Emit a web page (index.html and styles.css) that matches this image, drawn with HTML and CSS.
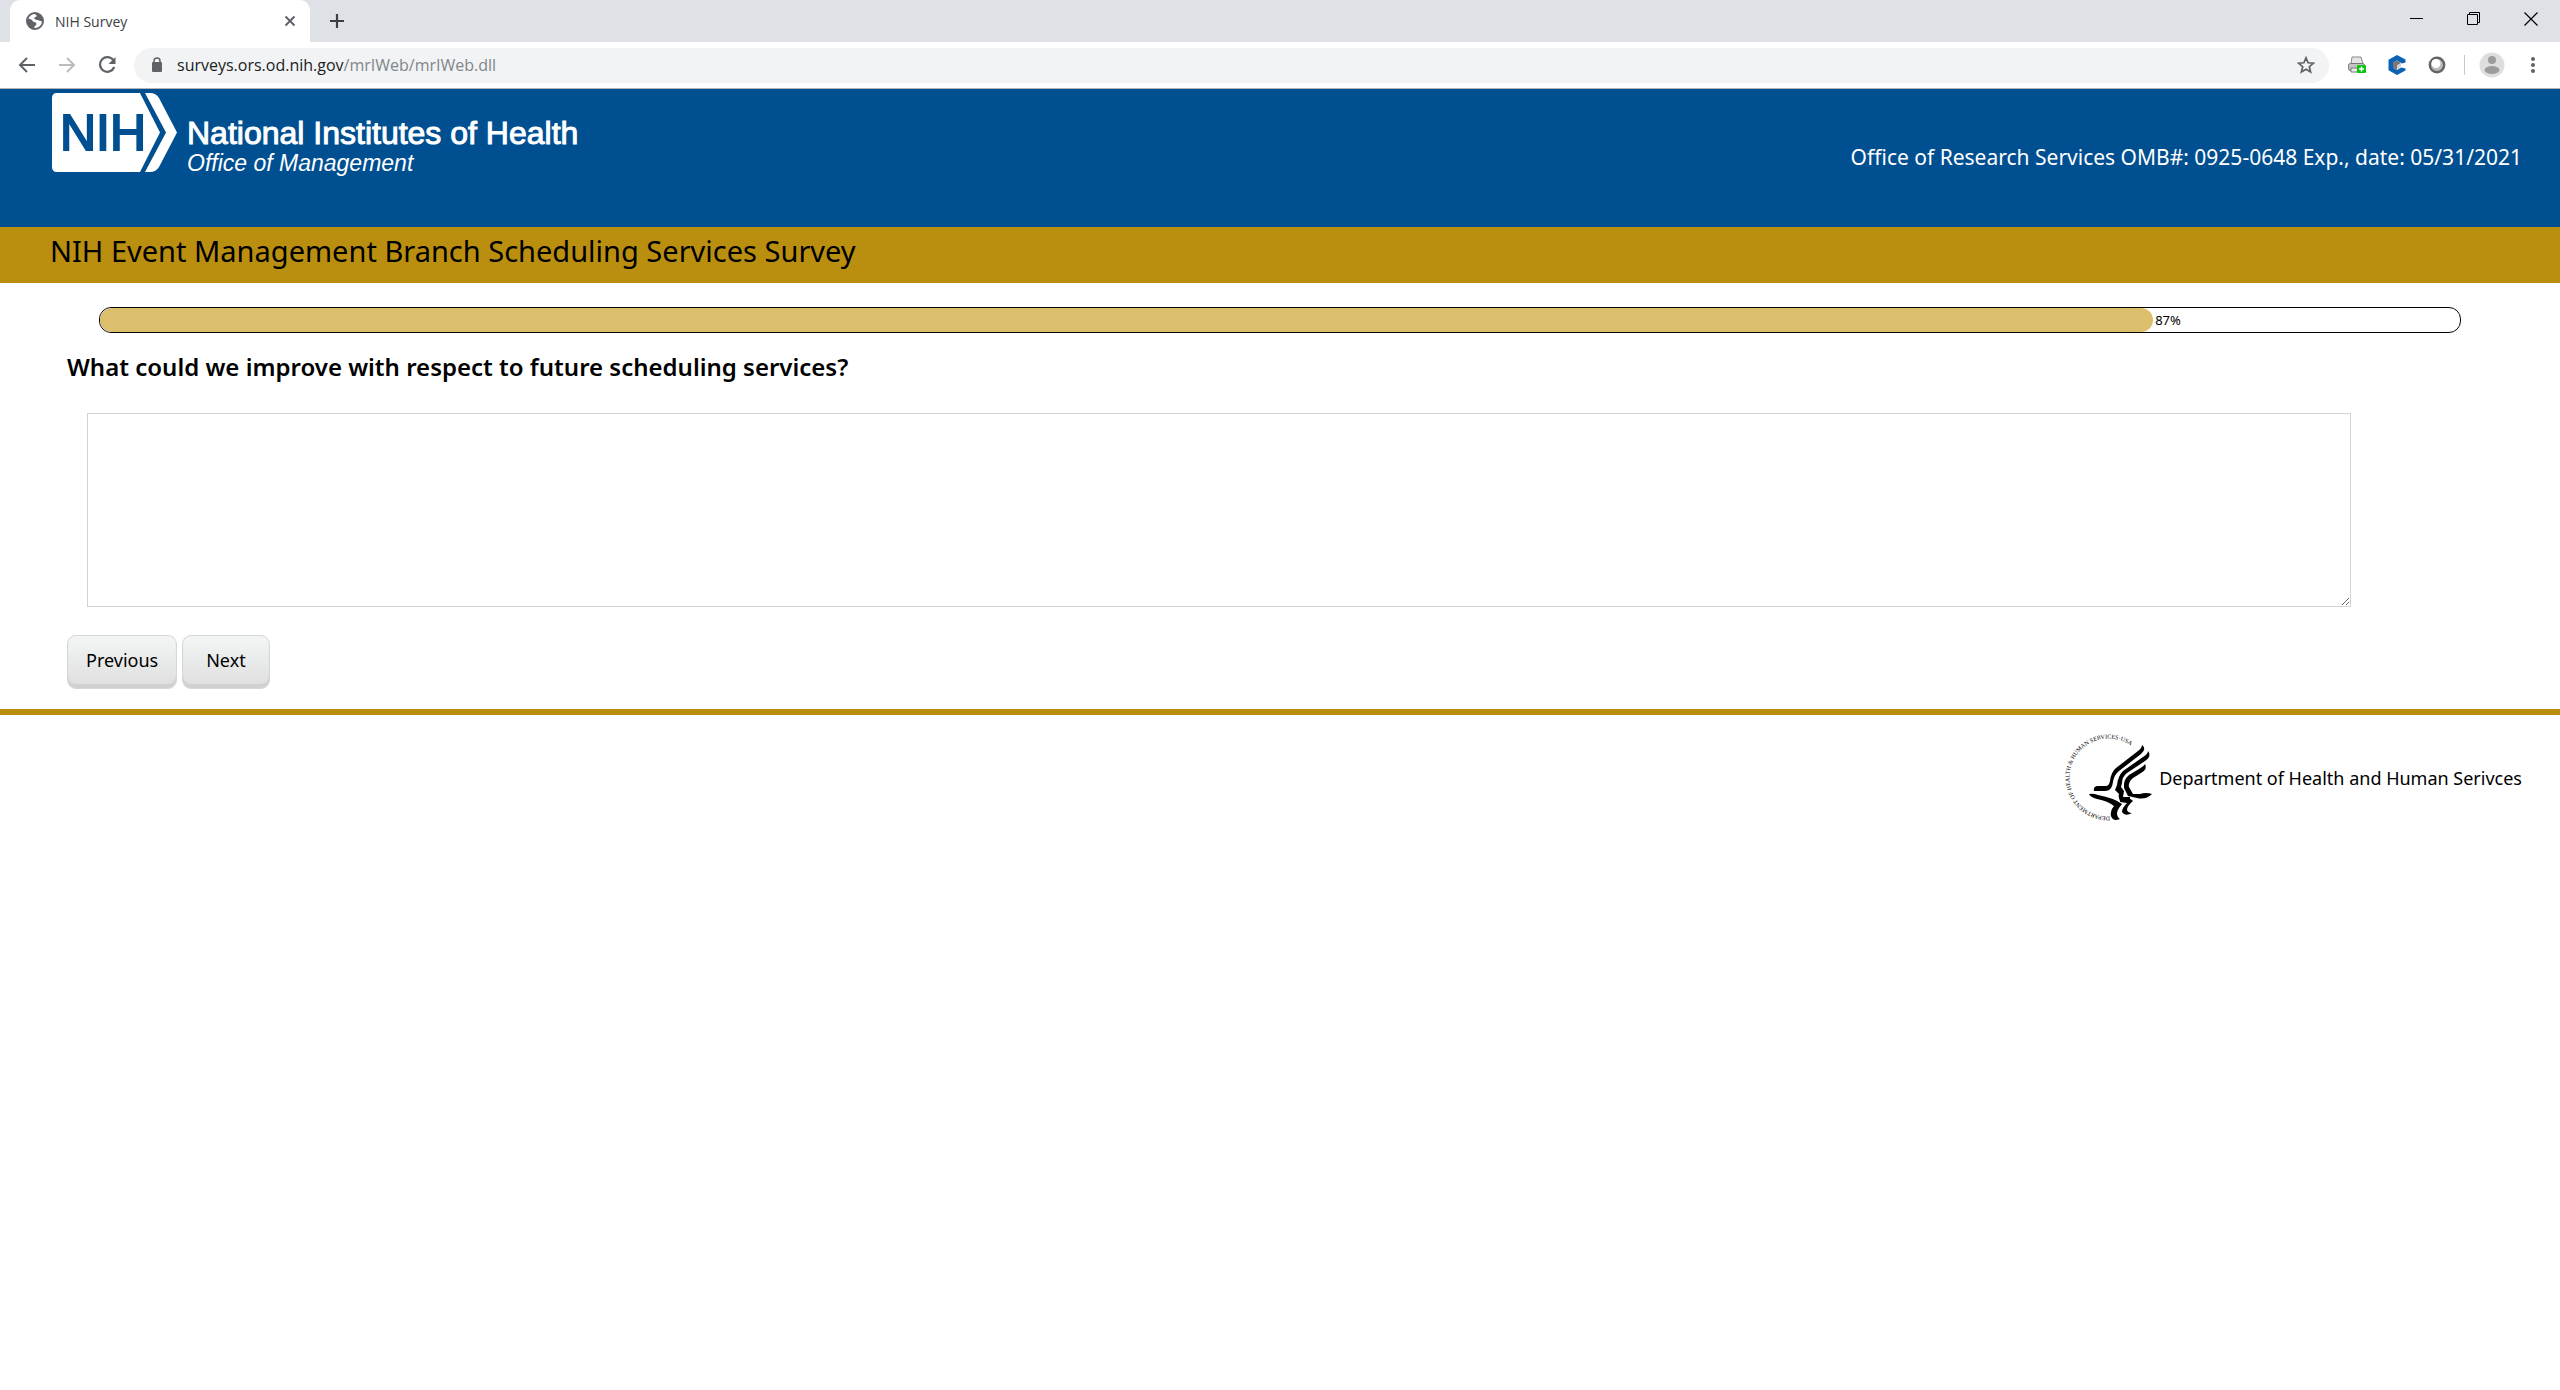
FILE: index.html
```html
<!DOCTYPE html>
<html lang="en">
<head>
  <meta charset="UTF-8">
  <meta name="viewport" content="width=device-width, initial-scale=1.0">
  <title>NIH Survey</title>
  <link rel="stylesheet" href="styles.css">
</head>
<body>

<!-- Browser window -->
<div class="tabs">
  <div class="tab">
    <svg class="globe" width="18" height="18" viewBox="0 0 18 18">
      <circle cx="9" cy="9" r="8" fill="#fff" stroke="#5f6368" stroke-width="2"/>
      <path d="M1 7c3-.5 5 .5 6 2.500 2 .5 3.500 1 3.500 3l-2 2-.5 3C4 17 1 14 1 9zM8 1c5-.5 9 3 9 8-2 .5-4 0-5-1-2 0-3.500-.5-4-2 1-1 2-1 3-2z" fill="#5f6368"/>
    </svg>
    <span class="tab-title">NIH Survey</span>
    <button class="icon-btn" aria-label="Close tab">
      <svg width="12" height="12" viewBox="0 0 12 12"><path d="M1.500 1.500l9 9M10.500 1.500l-9 9" stroke="#5f6368" stroke-width="2"/></svg>
    </button>
  </div>
  <button class="icon-btn new-tab" aria-label="New tab">
    <svg width="16" height="16" viewBox="0 0 16 16"><path d="M8 1v14M1 8h14" stroke="#3c4043" stroke-width="2.200"/></svg>
  </button>
  <div class="window-buttons">
    <button class="icon-btn" aria-label="Minimize"><svg width="14" height="14" viewBox="0 0 14 14"><path d="M0 6.500h13" stroke="#000"/></svg></button>
    <button class="icon-btn" aria-label="Restore"><svg width="14" height="14" viewBox="0 0 14 14"><path d="M.5 2.500h10v10H.5zM2.500 2.500v-2h10v10h-2" fill="none" stroke="#000"/></svg></button>
    <button class="icon-btn" aria-label="Close"><svg width="14" height="14" viewBox="0 0 14 14"><path d="M.5.5l13 13M13.500.5l-13 13" stroke="#000" stroke-width="1.200"/></svg></button>
  </div>
</div>

<div class="toolbar">
  <div class="nav">
    <button class="icon-btn" aria-label="Back"><svg width="18" height="18" viewBox="0 0 18 18"><path d="M17 9H2M9 2L2 9l7 7" fill="none" stroke="#5f6368" stroke-width="2"/></svg></button>
    <button class="icon-btn" aria-label="Forward"><svg width="18" height="18" viewBox="0 0 18 18"><path d="M1 9h15M9 2l7 7-7 7" fill="none" stroke="#babcbe" stroke-width="2"/></svg></button>
    <button class="icon-btn" aria-label="Reload"><svg width="18" height="18" viewBox="0 0 18 18"><path d="M15.500 4.500A7.300 7.300 0 1 0 16.200 11" fill="none" stroke="#5f6368" stroke-width="2.200"/><path d="M17.500 1v7h-7z" fill="#5f6368"/></svg></button>
  </div>
  <div class="address">
    <svg width="12" height="16" viewBox="0 0 12 16"><rect x="1" y="5" width="10" height="10" rx="1" fill="#5f6368"/><path d="M3 6V4a3 3 0 0 1 6 0v2" fill="none" stroke="#5f6368" stroke-width="1.500"/></svg>
    <span class="url">surveys.ors.od.nih.gov<span class="path">/mrIWeb/mrIWeb.dll</span></span>
    <button class="icon-btn" aria-label="Bookmark"><svg width="18" height="18" viewBox="0 0 18 18"><path d="M9 1.800l2.100 5 5.300.4-4.100 3.500 1.300 5.300L9 13.200 4.400 16l1.300-5.300-4.100-3.500 5.300-.4z" fill="none" stroke="#5f6368" stroke-width="1.700"/></svg></button>
  </div>
  <div class="extensions">
    <svg width="18" height="18" viewBox="0 0 18 18">
      <path d="M4 1h9l2 7H3z" fill="#e4e4e4" stroke="#8a8a8a"/>
      <rect x=".5" y="7.500" width="16" height="7" rx="2" fill="#c4c4c4" stroke="#777"/>
      <path d="M3 12h9v4H3z" fill="#eee" stroke="#777"/>
      <rect x="9" y="9" width="9" height="8" rx="1" fill="#0bc40b"/><path d="M13.500 10.500v5M11 13h5" stroke="#fff" stroke-width="1.500"/>
    </svg>
    <svg width="18" height="20" viewBox="0 0 18 20">
      <path d="M9 0l8.500 4.500v3L14 8.500 9 5.500 5 7.800v5L9 15l4-2.500 4.500 1v2L9 20 .5 15.300V4.700z" fill="#0d62b5"/>
      <path d="M9 5.500l4 2.500-4 2.500v4.500l-4-2.200v-5z" fill="#777"/><path d="M9 10.500l4-2.500v3l-4 4z" fill="#d0d0d0"/>
    </svg>
    <svg width="18" height="18" viewBox="0 0 18 18"><circle cx="9" cy="9" r="7.200" fill="#bbb" stroke="#666" stroke-width="2.400"/><circle cx="8" cy="7.500" r="4.500" fill="#fff"/></svg>
    <span class="divider"></span>
    <svg width="26" height="26" viewBox="0 0 26 26"><circle cx="13" cy="13" r="12.500" fill="#dedede"/><circle cx="13" cy="8" r="4" fill="#9c9c9c"/><ellipse cx="13" cy="18" rx="7.500" ry="4" fill="#9c9c9c"/></svg>
    <button class="icon-btn" aria-label="Menu"><svg width="6" height="18" viewBox="0 0 6 18"><g fill="#5f6368"><circle cx="3" cy="3" r="2"/><circle cx="3" cy="9" r="2"/><circle cx="3" cy="15" r="2"/></g></svg></button>
  </div>
</div>

<!-- Survey page -->
<header class="banner">
  <div class="brand">
    <svg width="128" height="82" viewBox="0 0 128 82">
      <path d="M7 1h83l20 39.500L90 80H7q-5 0-5-5V6q0-5 5-5z" fill="#fff"/>
      <path d="M95 1h5q6 0 9 5l18 34.500L109 75q-3 5-9 5h-5l21-39.500z" fill="#fff"/>
      <text class="nih" x="10" y="58">NIH</text>
    </svg>
    <div class="brand-text">
      <div class="institute">National Institutes of Health</div>
      <div class="office">Office of Management</div>
    </div>
  </div>
  <div class="omb">Office of Research Services OMB#: 0925-0648 Exp., date: 05/31/2021</div>
</header>
<h1 class="title">NIH Event Management Branch Scheduling Services Survey</h1>

<main>
  <div class="progress">
    <div class="bar" style="width: 87%"></div>
    <span class="percent">87%</span>
  </div>
  <form class="survey">
    <label class="question" for="answer">What could we improve with respect to future scheduling services?</label>
    <textarea id="answer" class="answer"></textarea>
    <div class="buttons">
      <button type="button" class="btn">Previous</button>
      <button type="button" class="btn next">Next</button>
    </div>
  </form>
</main>

<footer class="footer">
  <svg class="seal" width="90" height="92" viewBox="0 0 90 92">
    <path id="ring" d="M47 84.500A39 39 0 1 1 78 24" fill="none"/>
    <text class="seal-text"><textPath href="#ring">DEPARTMENT OF HEALTH &amp; HUMAN SERVICES·USA</textPath></text>
    <path d="M79 13q5 4-1 9L56 39q-5 4-6 11-1 9-8 9H31q-1-4 3-5h9q3 0 4-5 1-9 6-13l22-17q4-3 4-6z"/>
    <path d="M85 19q4 5-3 10L64 41q-5 4-5 10l-1 4 3 4-1 6h7v4H57q-2-4-1-7l-4-4 2-5q1-9 6-14l20-14q5-3 5-6z"/>
    <path d="M82 32q3 5-4 9l-8 5q-5 4-4 9l4 7h7q6-2 12 0-6 6-15 4l-9-2-4-8q-1-8 5-13l10-6q5-3 6-5z"/>
    <path d="M26 62q4-1 9 1 16 3 24 9-5 6-5 9 0 4 3 6-7 3-9-3-1-5 3-10-6-5-17-7-7-2-8-5z"/>
    <path d="M58 66q8-1 12 3-6 5-6 9 1 3 5 3-7 4-10-1 0-4 5-9l-7-1z"/>
  </svg>
  <span>Department of Health and Human Serivces</span>
</footer>

</body>
</html>
```
FILE: styles.css
```css
* {
  box-sizing: border-box;
}
body {
  margin: 0;
  background: #fff;
  color: #000;
  font-family: "Noto Sans", sans-serif;
  font-size: 18px;
}
svg {
  display: block;
  flex: none;
}
.icon-btn {
  padding: 0;
  border: none;
  background: none;
}

/* Browser */
.tabs {
  display: flex;
  align-items: center;
  height: 42px;
  padding-left: 10px;
  background: #dee1e6;
}
.tab {
  display: flex;
  align-items: center;
  align-self: stretch;
  gap: 11px;
  width: 300px;
  padding: 0 14px 0 16px;
  border-radius: 10px 10px 0 0;
  background: #fff;
}
.tab-title {
  flex: 1;
  font-family: "Open Sans", sans-serif;
  font-size: 14px;
  color: #3c4043;
}
.new-tab {
  margin-left: 19px;
}
.window-buttons {
  display: flex;
  gap: 43px;
  margin-left: auto;
  padding: 0 22px 4px 0;
}
.toolbar {
  display: flex;
  align-items: center;
  height: 47px;
  padding: 0 24px 0 18px;
  border-bottom: 1px solid #b5b5b5;
}
.nav {
  display: flex;
  gap: 22px;
  margin-right: 18px;
}
.address {
  display: flex;
  flex: 1;
  align-items: center;
  height: 35px;
  padding: 0 14px 0 17px;
  border-radius: 18px;
  background: #f1f3f4;
}
.url {
  flex: 1;
  margin-left: 14px;
  font-family: "Open Sans", sans-serif;
  font-size: 16px;
  color: #202124;
}
.path {
  color: #80868b;
}
.extensions {
  display: flex;
  align-items: center;
  gap: 22px;
  margin-left: 19px;
}
.divider {
  width: 1px;
  height: 20px;
  margin: 0 -8px 0 -4px;
  background: #c8c8c8;
}
.extensions .icon-btn {
  margin-left: 3px;
}

/* Banner */
.banner {
  display: flex;
  justify-content: space-between;
  height: 138px;
  padding: 0 38px 0 50px;
  background: #004f91;
  color: #fff;
}
.brand {
  display: flex;
  gap: 9px;
  padding-top: 3px;
}
.brand-text {
  padding-top: 24px;
  font-family: "Liberation Sans", Arial, sans-serif;
}
.nih {
  font-family: "Liberation Sans", Arial, sans-serif;
  font-size: 50px;
  fill: #004f91;
  stroke: #004f91;
  stroke-width: 2px;
}
.institute {
  font-size: 32px;
  line-height: 34px;
  -webkit-text-stroke: 1px #fff;
}
.office {
  font-size: 23px;
  line-height: 26px;
  font-style: italic;
}
.omb {
  padding-top: 54px;
  font-size: 21px;
  line-height: 28px;
}
.title {
  height: 56px;
  margin: 0;
  padding-left: 50px;
  background: #ba8f10;
  font-size: 29px;
  line-height: 48px;
  font-weight: normal;
}

/* Survey */
.progress {
  display: flex;
  align-items: center;
  height: 26px;
  margin: 24px 99px 0;
  border: 1px solid #000;
  border-radius: 12px;
}
.bar {
  height: 100%;
  border-radius: 12px;
  background: #dcbf6d;
}
.percent {
  margin-left: 2px;
  font-size: 13px;
}
.survey {
  padding: 16px 38px 0 67px;
}
.question {
  display: block;
  font-size: 24px;
  line-height: 36px;
  font-weight: 600;
}
.answer {
  display: block;
  width: calc(100% - 191px);
  height: 194px;
  margin: 28px 0 28px 20px;
  border: 1px solid #d3d3d3;
}
.buttons {
  display: flex;
  gap: 5px;
}
.btn {
  height: 54px;
  padding: 0 18px 4px;
  border: 1px solid #d5d8d8;
  border-radius: 9px;
  background: linear-gradient(#f3f6f5, #dedede);
  box-shadow: inset 0 -4px 1px #d0d0d0;
  font-family: inherit;
  font-size: 18px;
  color: #000;
}
.next {
  padding: 0 23px 4px;
}

/* Footer */
.footer {
  display: flex;
  align-items: center;
  justify-content: flex-end;
  gap: 6px;
  margin-top: 20px;
  padding: 17px 38px 0;
  border-top: 6px solid #ba8f10;
}
.seal-text {
  font-family: "Liberation Serif", serif;
  font-size: 6px;
}
```
